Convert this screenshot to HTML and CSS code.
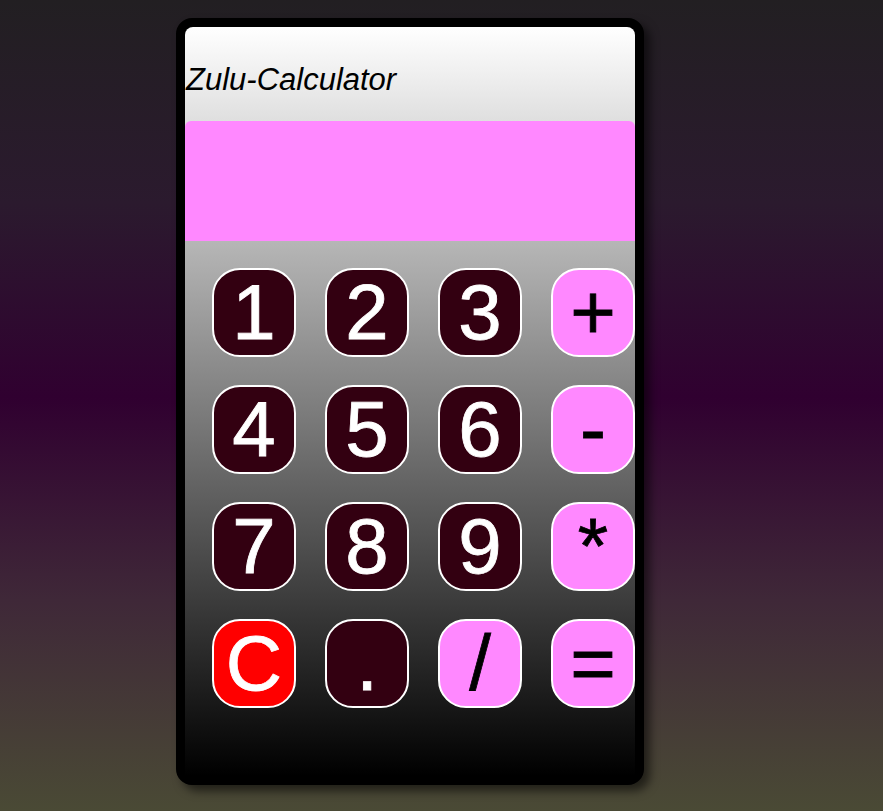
FILE: index.html
```html
<!DOCTYPE html>
<html>
<head>
<meta charset="utf-8">
<link rel="stylesheet" href="styles.css">
</head>
<body>
<div class="calc">
  <div class="inner">
    <div class="header"><h1 class="title">Zulu-Calculator</h1></div>
    <div class="display"></div>
    <div class="keys">
      <div class="key num">1</div>
      <div class="key num">2</div>
      <div class="key num">3</div>
      <div class="key op">+</div>
      <div class="key num">4</div>
      <div class="key num">5</div>
      <div class="key num">6</div>
      <div class="key op">-</div>
      <div class="key num">7</div>
      <div class="key num">8</div>
      <div class="key num">9</div>
      <div class="key op">*</div>
      <div class="key clear">C</div>
      <div class="key num">.</div>
      <div class="key op">/</div>
      <div class="key op">=</div>
    </div>
  </div>
</div>
</body>
</html>
```
FILE: styles.css
```css
html, body {
  margin: 0;
  height: 100%;
}
body {
  background: linear-gradient(#221f22 0%, #2b1a2e 25%, #300030 49%, #3f2838 74%, #4a4a35 100%);
  font-family: "Liberation Sans", Arial, sans-serif;
  padding-top: 18px;
  box-sizing: border-box;
}
.calc {
  margin-left: 176px;
  width: 450px;
  border: 9px solid #000;
  border-radius: 16px;
  background: #000;
  box-shadow: 6px 6px 10px rgba(0, 0, 0, 0.55);
}
.inner {
  height: 749px;
  border-radius: 8px 8px 0 0;
  background: linear-gradient(#ffffff, #000000);
  overflow: hidden;
  display: flex;
  flex-direction: column;
}
.header {
  height: 94px;
  display: flex;
  align-items: center;
}
.title {
  margin: 0;
  padding: 12px 0 0 1px;
  font-family: "Liberation Sans", Arial, sans-serif;
  font-style: italic;
  font-weight: normal;
  font-size: 31px;
  color: #000;
}
.display {
  height: 120px;
  background: #ff88ff;
  border-radius: 6px 6px 0 0;
}
.keys {
  display: grid;
  grid-template-columns: repeat(4, 84px);
  grid-auto-rows: 89px;
  column-gap: 29px;
  row-gap: 28px;
  padding: 27px 0 0 27px;
}
.key {
  box-sizing: border-box;
  border: 2px solid #fff;
  border-radius: 28px;
  font-size: 78px;
  line-height: 85px;
  text-align: center;
  -webkit-text-stroke: 0.8px currentColor;
}
.num {
  background: #330011;
  color: #fff;
}
.op {
  background: #ff88ff;
  color: #000;
}
.clear {
  background: #ff0000;
  color: #fff;
}
```
